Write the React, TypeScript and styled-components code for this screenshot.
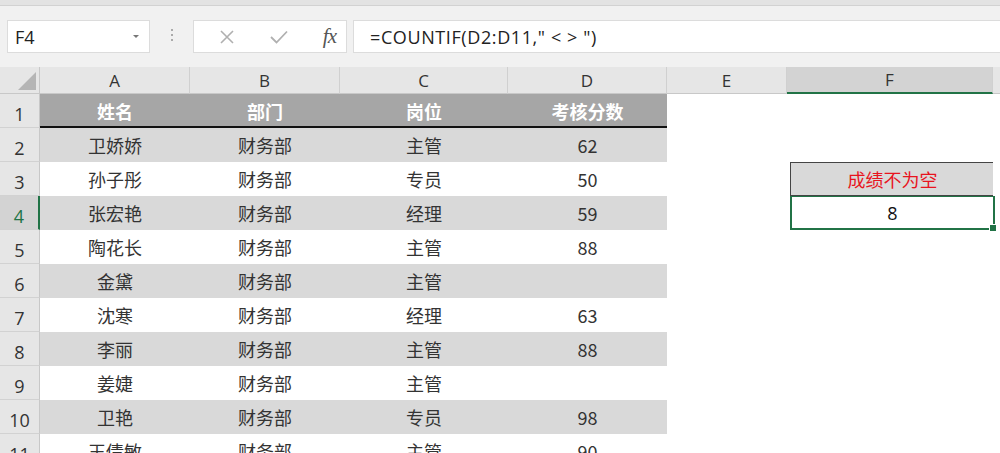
import React from 'react';
import styled, { createGlobalStyle, css } from 'styled-components';

const GlobalStyle = createGlobalStyle`
  html, body {
    margin: 0;
    padding: 0;
    background: #ffffff;
    overflow: hidden;
  }
  body {
    font-family: "Noto Sans CJK SC", "Noto Sans", sans-serif;
  }
`;

const COLS = [40, 150, 150, 168, 159, 120, 206, 60];
const GREEN = '#217346';

const Page = styled.div`
  width: 1000px;
  height: 453px;
  overflow: hidden;
  display: flex;
  flex-direction: column;
  & > * {
    flex-shrink: 0;
  }
`;

const RibbonEdge = styled.div`
  height: 5px;
  background: #e3e3e3;
  border-bottom: 1px solid #d2d2d2;
`;

const FormulaBar = styled.div`
  height: 61px;
  background: #f1f1f1;
  display: flex;
  align-items: flex-start;
  padding: 14px 0 0 7px;
  box-sizing: border-box;
`;

const NameBox = styled.div`
  width: 143px;
  height: 33px;
  background: #fff;
  border: 1px solid #dcdcdc;
  box-sizing: border-box;
  display: flex;
  align-items: center;
  justify-content: space-between;
  padding: 0 10px 0 7px;
  font-family: "Open Sans", "Noto Sans", sans-serif;
  font-size: 18px;
  color: #222;
`;

const Caret = styled.span`
  width: 0;
  height: 0;
  border-left: 3px solid transparent;
  border-right: 3px solid transparent;
  border-top: 3px solid #777;
`;

const Dots = styled.div`
  width: 43px;
  display: flex;
  flex-direction: column;
  align-items: center;
  gap: 3px;
  padding-top: 9px;
  & > span {
    width: 2px;
    height: 2px;
    background: #aaa;
  }
`;

const FxBox = styled.div`
  width: 154px;
  height: 33px;
  background: #fff;
  border: 1px solid #dcdcdc;
  box-sizing: border-box;
  display: flex;
  align-items: center;
  padding: 0 10px 0 16px;
`;

const FxIcon = styled.span<{ $w: number }>`
  width: ${p => p.$w}px;
  display: flex;
  align-items: center;
  justify-content: center;
`;

const FxText = styled.span`
  font-family: "Liberation Serif", serif;
  font-style: italic;
  font-size: 21px;
  color: #555;
  margin-left: auto;
  letter-spacing: -1px;
`;

const FormulaInput = styled.div`
  flex: 1;
  height: 33px;
  margin-left: 6px;
  background: #fff;
  border: 1px solid #dcdcdc;
  border-right: none;
  box-sizing: border-box;
  display: flex;
  align-items: center;
  padding-left: 16px;
  font-family: "Open Sans", "Noto Sans", sans-serif;
  font-size: 18px;
  letter-spacing: 0.6px;
  color: #222;
  white-space: pre;
`;

const Sheet = styled.div`
  display: flex;
  flex-direction: column;
`;

const Row = styled.div<{ $h: number }>`
  display: grid;
  grid-template-columns: ${COLS.map(c => `${c}px`).join(' ')};
  height: ${p => p.$h}px;
`;

const ColHead = styled.div<{ $active?: boolean }>`
  background: ${p => (p.$active ? '#d3d3d3' : '#e6e6e6')};
  border-right: 1px solid #d0d0d0;
  border-bottom: ${p => (p.$active ? `2px solid ${GREEN}` : '1px solid #c8c8c8')};
  box-sizing: border-box;
  display: flex;
  align-items: flex-end;
  justify-content: center;
  padding-bottom: 1px;
  font-family: "Open Sans", "Noto Sans", sans-serif;
  font-size: 17px;
  color: #333;
`;

const Corner = styled.div`
  background: #e6e6e6;
  border-right: 1px solid #c8c8c8;
  border-bottom: 1px solid #c8c8c8;
  box-sizing: border-box;
  display: flex;
  align-items: flex-end;
  justify-content: flex-end;
  padding: 0 3px 3px 0;
  &::after {
    content: '';
    width: 0;
    height: 0;
    border-left: 18px solid transparent;
    border-bottom: 18px solid #b5b5b5;
  }
`;

const RowHead = styled.div<{ $active?: boolean }>`
  background: ${p => (p.$active ? '#d3d3d3' : '#e6e6e6')};
  color: ${p => (p.$active ? GREEN : '#333')};
  border-right: ${p => (p.$active ? `2px solid ${GREEN}` : '1px solid #c8c8c8')};
  border-bottom: 1px solid #d2d2d2;
  box-sizing: border-box;
  display: flex;
  align-items: flex-end;
  justify-content: center;
  padding-bottom: 1px;
  font-family: "Open Sans", "Noto Sans", sans-serif;
  font-size: 18px;
`;

type CellKind = 'head' | 'band' | 'plain' | 'label' | 'result';

const Cell = styled.div<{ $kind: CellKind }>`
  box-sizing: border-box;
  display: flex;
  align-items: center;
  justify-content: center;
  font-size: 18px;
  color: #333;
  background: #fff;
  ${p =>
    p.$kind === 'head' &&
    css`
      background: #a6a6a6;
      color: #fff;
      font-weight: bold;
      border-bottom: 2px solid #111;
      padding-top: 2px;
    `}
  ${p =>
    p.$kind === 'band' &&
    css`
      background: #d9d9d9;
    `}
  ${p =>
    p.$kind === 'label' &&
    css`
      background: #d9d9d9;
      color: #e8141e;
      border: 1px solid #444;
      margin: 0 -2px 0 3px;
    `}
  ${p =>
    p.$kind === 'result' &&
    css`
      position: relative;
      color: #111;
      border: 2px solid ${GREEN};
      border-top-width: 1px;
      margin: 0 -2px 0 3px;
      font-family: "Open Sans", "Noto Sans", sans-serif;
    `}
`;

const FillHandle = styled.span`
  position: absolute;
  right: -4px;
  bottom: -4px;
  width: 6px;
  height: 6px;
  background: ${GREEN};
  border: 1px solid #fff;
`;

const header = ['姓名', '部门', '岗位', '考核分数'];
const data: [string, string, string, string][] = [
  ['卫娇娇', '财务部', '主管', '62'],
  ['孙子彤', '财务部', '专员', '50'],
  ['张宏艳', '财务部', '经理', '59'],
  ['陶花长', '财务部', '主管', '88'],
  ['金黛', '财务部', '主管', ''],
  ['沈寒', '财务部', '经理', '63'],
  ['李丽', '财务部', '主管', '88'],
  ['姜婕', '财务部', '主管', ''],
  ['卫艳', '财务部', '专员', '98'],
  ['王倩敏', '财务部', '主管', '90'],
];

// G is only a sliver at the right edge, so its letter is left out
const letters = ['A', 'B', 'C', 'D', 'E', 'F', ''];

const sideCells = (rowNo: number) => {
  if (rowNo === 3) {
    return [<Cell key="e" $kind="plain" />, <Cell key="f" $kind="label">成绩不为空</Cell>, <Cell key="g" $kind="plain" />];
  }
  if (rowNo === 4) {
    return [
      <Cell key="e" $kind="plain" />,
      <Cell key="f" $kind="result">
        8
        <FillHandle />
      </Cell>,
      <Cell key="g" $kind="plain" />,
    ];
  }
  return [<Cell key="e" $kind="plain" />, <Cell key="f" $kind="plain" />, <Cell key="g" $kind="plain" />];
};

const App: React.FC = () => {
  return (
    <Page>
      <GlobalStyle />
      <RibbonEdge />
      <FormulaBar>
        <NameBox>
          F4
          <Caret />
        </NameBox>
        <Dots>
          <span />
          <span />
          <span />
        </Dots>
        <FxBox>
          <FxIcon $w={34}>
            <svg width="14" height="14" viewBox="0 0 14 14">
              <path d="M1 1 L13 13 M13 1 L1 13" stroke="#b0b0b0" strokeWidth="1.6" fill="none" />
            </svg>
          </FxIcon>
          <FxIcon $w={70}>
            <svg width="18" height="14" viewBox="0 0 18 14">
              <path d="M1 7 L6.5 12.5 L17 1.5" stroke="#b0b0b0" strokeWidth="1.8" fill="none" />
            </svg>
          </FxIcon>
          <FxText>fx</FxText>
        </FxBox>
        <FormulaInput>=COUNTIF(D2:D11," &lt; &gt; ")</FormulaInput>
      </FormulaBar>
      <Sheet>
        <Row $h={27}>
          <Corner />
          {letters.map((l, i) => (
            <ColHead key={i} $active={l === 'F'}>
              {l}
            </ColHead>
          ))}
        </Row>
        <Row $h={34}>
          <RowHead>1</RowHead>
          {header.map(h => (
            <Cell key={h} $kind="head">
              {h}
            </Cell>
          ))}
          {sideCells(1)}
        </Row>
        {data.map((r, i) => {
          const rowNo = i + 2;
          const kind: CellKind = rowNo % 2 === 0 ? 'band' : 'plain';
          return (
            <Row $h={34} key={rowNo}>
              <RowHead $active={rowNo === 4}>{rowNo}</RowHead>
              {r.map((v, j) => (
                <Cell key={j} $kind={kind}>
                  {v}
                </Cell>
              ))}
              {sideCells(rowNo)}
            </Row>
          );
        })}
      </Sheet>
    </Page>
  );
};

export default App;
